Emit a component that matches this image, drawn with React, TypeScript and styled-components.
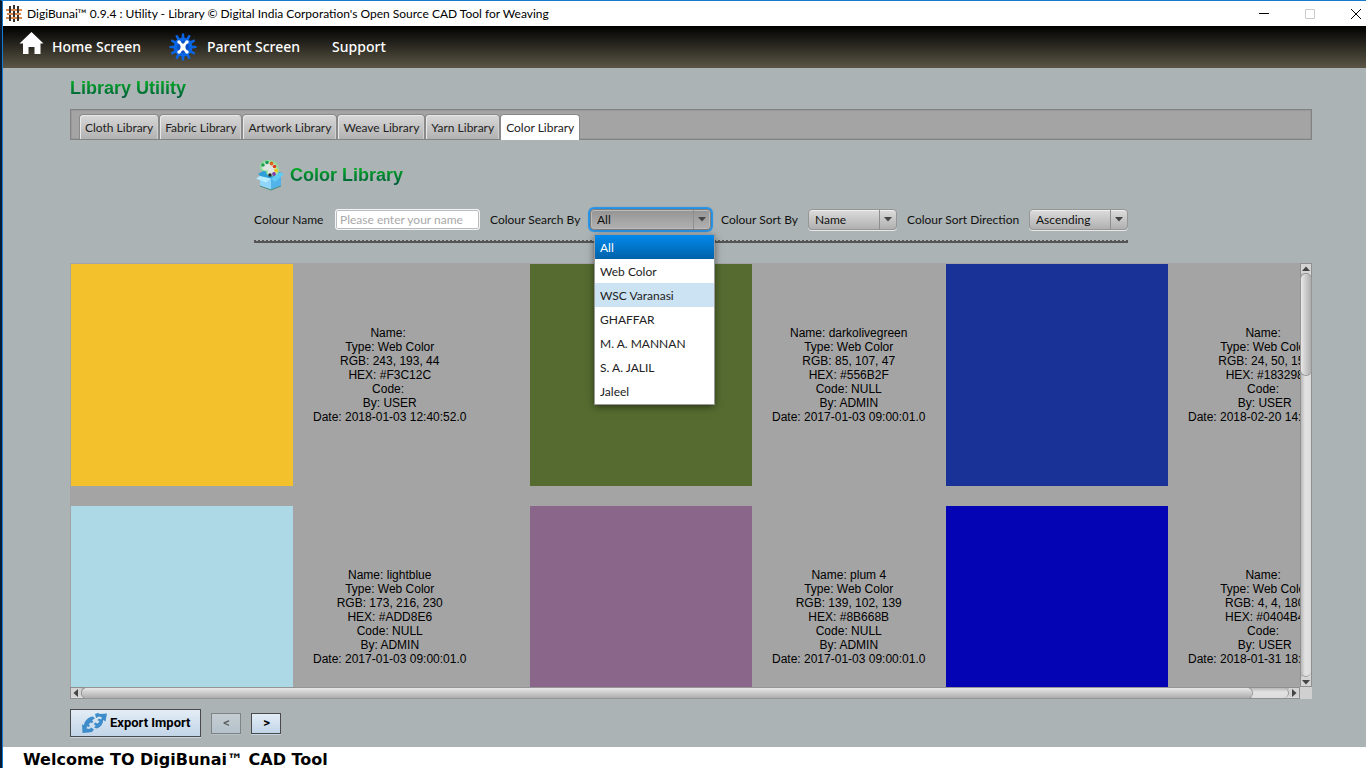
import React, { useState } from "react";
import styled, { createGlobalStyle, css } from "styled-components";

const uiFont = `Lato, "Segoe UI", sans-serif`;
const arial = `"Liberation Sans", Arial, sans-serif`;

const GlobalStyle = createGlobalStyle`
  *, *::before, *::after { box-sizing: border-box; }
  body { margin: 0; font-family: ${uiFont}; font-size: 12px; color: #111; }
  button, input, select { font: inherit; color: inherit; margin: 0; }
`;

const Window = styled.div`
  display: flex;
  flex-direction: column;
  height: 100vh;
  overflow: hidden;
  border-top: 1px solid #1979ca;
  border-left: 2px solid #061a33;
  background: #abb3b4;
`;

const Inner = styled.div`
  flex: 1;
  min-height: 0;
  display: flex;
  flex-direction: column;
  border-left: 1px solid #1979ca;
`;

const TitleBar = styled.header`
  display: flex;
  align-items: center;
  height: 25px;
  flex: none;
  padding-left: 3px;
  background: #fff;
  color: #000;
`;

const WindowTitle = styled.span`
  flex: 1;
  margin-left: 5px;
  white-space: nowrap;
`;

const WindowButton = styled.button`
  width: 46px;
  height: 25px;
  flex: none;
  display: flex;
  align-items: center;
  justify-content: center;
  padding: 0;
  border: 0;
  background: none;
  color: #000;

  &:disabled { color: #ccc; }
  &:last-child { margin-right: -13px; }
`;

const MenuBar = styled.nav`
  display: flex;
  align-items: center;
  height: 42px;
  flex: none;
  padding-left: 16px;
  background: linear-gradient(#000, #5b5646);
`;

const MenuButton = styled.button<{ $wide?: boolean }>`
  display: flex;
  align-items: center;
  gap: ${(p) => (p.$wide ? 10 : 8)}px;
  height: 42px;
  padding: 0;
  margin-right: ${(p) => (p.$wide ? 32 : 28)}px;
  border: 0;
  background: none;
  color: #fff;
  font-family: "Noto Sans", sans-serif;
  font-size: 14px;
  font-weight: 500;
  line-height: 20px;
`;

const Content = styled.main`
  flex: 1;
  min-height: 0;
  display: flex;
  flex-direction: column;
  padding: 10px 54px 10px 67px;
`;

const Heading = styled.h1`
  width: fit-content;
  margin: 0;
  font: bold 18px/21px ${arial};
  background: linear-gradient(#00b020 10%, #005c3c 90%);
  background-clip: text;
  -webkit-background-clip: text;
  color: transparent;
`;

const TabBar = styled.div`
  display: flex;
  align-items: flex-end;
  height: 31px;
  flex: none;
  margin-top: 10px;
  padding-left: 8px;
  border: 1px solid #828282;
  background: #a4a4a4;
  box-shadow: inset 0 0 0 1px #999;
`;

const Tab = styled.button<{ $active?: boolean }>`
  height: 25px;
  padding: 0 5px;
  border: 1px solid #8a8a8a;
  border-bottom-width: 0;
  border-radius: 4px 4px 0 0;
  background: linear-gradient(#d8d8d8, #b2b2b2);
  box-shadow: inset 1px 1px 0 #e8e8e8, inset -1px 0 0 #d0d0d0;
  color: #222;
  white-space: nowrap;
  ${(p) =>
    p.$active &&
    css`
      height: 26px;
      margin-bottom: -1px;
      background: #fff;
      box-shadow: none;
    `}
`;

const SearchPanel = styled.section`
  align-self: center;
  flex: none;
  margin-top: 19px;
`;

const PanelTitle = styled.div`
  display: flex;
  align-items: center;
  gap: 4px;
  height: 32px;
`;

const SearchForm = styled.form`
  display: grid;
  grid-template-columns: 71px 145px 90px 121px 77px 89px 112px 99px;
  column-gap: 10px;
  align-items: center;
  height: 22px;
  margin-top: 17px;
`;

const FieldLabel = styled.label`
  white-space: nowrap;
  color: #111;
`;

const TextInput = styled.input`
  width: 100%;
  height: 21px;
  padding: 0 4px;
  border: 1px solid #f4f4f4;
  border-radius: 3px;
  outline: 0;
  background: #fff;
  box-shadow: inset 0 0 0 1px #b9bcbd;

  &::placeholder { color: #a9a9a9; opacity: 1; }
`;

const SelectBox = styled.div<{ $open?: boolean }>`
  position: relative;
  height: 21px;
  border: 1px solid #969696;
  border-radius: 4px;
  background: linear-gradient(#dcdcdc, #b0b0b0);
  box-shadow: inset 0 1px 0 #eee, 0 1px 0 #e8e8e8;
  ${(p) =>
    p.$open &&
    css`
      border-color: #7c7c7c;
      background: linear-gradient(#949494, #b2b2b2);
      box-shadow: inset 0 0 0 1px #bcbcbc, 0 0 0 1px #2191e8, 0 0 1px 2px #2191e8;
    `}
`;

const Select = styled.select`
  appearance: none;
  width: 100%;
  height: 19px;
  padding: 1px 22px 0 6px;
  border: 0;
  outline: 0;
  background: none;
`;

const SelectArrow = styled.span`
  position: absolute;
  top: 0;
  right: 0;
  bottom: 0;
  width: 17px;
  display: flex;
  align-items: center;
  justify-content: center;
  border-left: 1px solid #8e8e8e;
  pointer-events: none;
  color: #444;
`;

const Popup = styled.ul`
  position: absolute;
  z-index: 5;
  top: 25px;
  left: 4px;
  width: 119px;
  margin: 0;
  padding: 0 0 1px;
  list-style: none;
  background: #fff;
  box-shadow: 0 0 0 1px #9a9a9a, 0 2px 8px rgba(0, 0, 0, 0.6);
`;

const Option = styled.li<{ $state?: "selected" | "hover" }>`
  height: 24px;
  padding: 1px 5px 0;
  line-height: 24px;
  color: #222;
  ${(p) =>
    p.$state === "selected" &&
    css`
      color: #fff;
      background: linear-gradient(#0389ec, #0062a8);
    `}
  ${(p) =>
    p.$state === "hover" &&
    css`
      background: #cce3f3;
    `}
`;

const Separator = styled.div`
  height: 3px;
  margin-top: 10px;
  border-bottom: 2px solid #555;
  background: repeating-linear-gradient(90deg, #555 0 2px, #abb3b4 2px 4px);
`;

const ScrollPane = styled.section`
  flex: 1;
  min-height: 0;
  display: grid;
  grid-template: minmax(0, 1fr) 12px / minmax(0, 1fr) 12px;
  margin-top: 20px;
`;

const Viewport = styled.div`
  overflow: hidden;
  padding: 1px 0 0 1px;
  background: #a4a4a4;
`;

const ColorGrid = styled.div`
  display: grid;
  grid-template-columns: 439px 396px 396px;
  gap: 20px;
`;

const ColorItem = styled.article`
  display: flex;
  align-items: center;
  gap: 20px;
  height: 222px;
`;

const Swatch = styled.div<{ $color: string }>`
  width: 222px;
  height: 222px;
  flex: none;
  background: ${(p) => p.$color};
`;

const ColorInfo = styled.p`
  margin: 0;
  font: 12px/14px ${arial};
  text-align: center;
  white-space: pre;
  color: #000;
`;

const ScrollBar = styled.div<{ $vertical?: boolean }>`
  display: flex;
  flex-direction: ${(p) => (p.$vertical ? "column" : "row")};
  border: 1px solid #8f8f8f;
  background: linear-gradient(${(p) => (p.$vertical ? "90deg" : "180deg")}, #b8b8b8, #e2e2e2 40%, #dcdcdc);
`;

const ScrollArrow = styled.button`
  flex: none;
  width: 10px;
  height: 9px;
  display: flex;
  align-items: center;
  justify-content: center;
  padding: 0;
  border: 0;
  background: #d4d4d4;
  color: #444;
`;

const ScrollTrack = styled.div<{ $vertical?: boolean }>`
  flex: 1;
  display: flex;
  flex-direction: ${(p) => (p.$vertical ? "column" : "row")};
  border: 0 solid #999;
  border-width: ${(p) => (p.$vertical ? "1px 0" : "0 1px")};
  border-radius: 5px;
`;

const ScrollThumb = styled.div<{ $vertical?: boolean; $size: number }>`
  flex: 0 0 ${(p) => p.$size}%;
  border-radius: 5px;
  background: linear-gradient(${(p) => (p.$vertical ? "90deg" : "180deg")}, #e8e8e8, #adadad);
  box-shadow: 0 0 0 1px #959595;
`;

const ScrollCorner = styled.div`
  background: #d0d0d0;
`;

const Actions = styled.div`
  display: flex;
  align-items: center;
  gap: 10px;
  flex: none;
  height: 28px;
  margin-top: 10px;
`;

const ActionButton = styled.button`
  display: flex;
  align-items: center;
  justify-content: center;
  height: 28px;
  padding: 0 10px;
  gap: 2px;
  border: 1px solid #4a4a4a;
  background: linear-gradient(#e3edf6, #c2d5e8);
  box-shadow: 0 1px 0 #c4d4e4;
  font-family: Roboto, sans-serif;
  font-size: 13px;
  font-weight: 700;
  line-height: 16px;
  color: #000;
  white-space: nowrap;
`;

const PageButton = styled(ActionButton)`
  width: 30px;
  height: 21px;
  padding: 0;

  &:disabled { opacity: 0.45; }
`;

const StatusBar = styled.footer`
  flex: none;
  height: 21px;
  padding: 3px 20px 0;
  background: #fff;
  color: #000;
  font: bold 16px/19px "DejaVu Sans", "Arial Black", sans-serif;
  white-space: nowrap;
`;

const WeaveIcon = () => (
  <svg width="16" height="17" viewBox="0 0 16 17" fill="none" strokeWidth="2" aria-hidden="true">
    <path d="M0 5h3M5 5h6M13 5h3M1 9h6M9 9h6M0 13h3M5 13h6M13 13h3" stroke="#d98a50" />
    <path d="M4 1v7M4 10v6M8 0v4M8 6v6M8 14v3M12 1v7M12 10v6" stroke="#3a302c" />
  </svg>
);

const HomeIcon = () => (
  <svg width="25" height="33" viewBox="0 0 25 33" aria-hidden="true">
    <path d="M12.500 1 24.500 12.500h-3V23H15.500v-7h-6v7H4V12.500H.5z" fill="#fff" />
  </svg>
);

const GearIcon = () => (
  <svg width="28" height="28" viewBox="-14 -14 28 28" aria-hidden="true">
    {Array.from({ length: 12 }, (_, i) => (
      <path key={i} d="M-1.500-8-1.100-13.500h2.200L1.500-8z" fill="#0a66e4" transform={`rotate(${i * 30})`} />
    ))}
    <circle r="9.500" fill="#0a66e4" />
    <circle r="6" fill="#0a4fc0" />
    <path d="M-3.500-5 3.500 5M3.500-5-3.500 5" stroke="#fff" strokeWidth="2.500" />
    <g fill="#fff">
      <ellipse rx="2.500" ry="3.500" />
      <circle cx="-4" cy="-5" r="1.700" />
      <circle cx="4" cy="-5" r="1.700" />
      <circle cx="-4" cy="5" r="1.700" />
      <circle cx="4" cy="5" r="1.700" />
    </g>
  </svg>
);

const PaletteIcon = () => (
  <svg width="32" height="32" viewBox="0 0 32 32" aria-hidden="true">
    <path d="M4 15 9 12h14l5 2-7 6H10z" fill="#2e9fd8" />
    <path d="M6 8C6 3 10 1 15 1c7 0 10 5 10 11 0 4-3 6-8 5-4 0-5-3-5-5-3 1-6 0-6-4z" fill="#8fe0a0" />
    <path d="M8 8c0-4 3-5 7-5 5 0 8 4 8 9 0 3-2 4-6 4-3 0-4-2-3-5-3 1-6 0-6-3z" fill="#dfe6e2" />
    <circle cx="9" cy="6" r="1.800" fill="#20a050" />
    <circle cx="13" cy="3.500" r="1.800" fill="#1f9a58" />
    <circle cx="17.500" cy="4.500" r="1.900" fill="#e0651c" />
    <circle cx="20.500" cy="7.500" r="1.800" fill="#d8411a" />
    <circle cx="22" cy="11.500" r="1.900" fill="#f0c818" />
    <circle cx="20" cy="15" r="1.900" fill="#7a3ca8" />
    <circle cx="16" cy="16" r="1.700" fill="#222" />
    <path d="M6 18 17 20v11L6 27z" fill="#8fd6fa" />
    <path d="M17 20 27 16v11l-10 4z" fill="#52b2ea" />
    <path d="M6 17 2 19.500l10 4 5-4z" fill="#b6ecff" />
    <path d="m17 19.500 4 3.500 9-8-4-1.500z" fill="#62cdf2" />
    <path d="M6 27l11 4 10-4" fill="none" stroke="#4f8a78" />
  </svg>
);

const TransferIcon = () => (
  <svg width="27" height="22" viewBox="0 0 27 22" aria-hidden="true">
    <g fill="#3f8ccb">
      <path d="M14 2 17 1l2 1 7-.5-1.500 8L22 8c0 4-2 7-6 8.500l-3-1 2-2-2.500-1.500 2-1.500 2.500 1.500 2-2-2.500-2 1.500-1.500 2 1 1-2-3-1-3 1.500z" />
      <path d="M1 12.500 3 13c.5-4 4-8 9-8.500l2 2-3 1.500 1.500 2-2 1-2-1-1.500 2 2 1.500-1 1.500L6 14l-.5 2.500 3 .5 1.500-1.500 3 2-2 2.500-4 .5L1.500 21z" />
      <path d="M3.500 12 10 5.500 12 7 6 15zM14 14l7-7 1 3-5 6z" />
    </g>
  </svg>
);

const Triangle = ({ turn = 0 }: { turn?: number }) => (
  <svg width="8" height="8" viewBox="0 0 8 8" aria-hidden="true">
    <path d="M0 2h8L4 6.500z" fill="currentColor" transform={`rotate(${turn} 4 4)`} />
  </svg>
);

const tabs = ["Cloth Library", "Fabric Library", "Artwork Library", "Weave Library", "Yarn Library", "Color Library"];
const sources = ["All", "Web Color", "WSC Varanasi", "GHAFFAR", "M. A. MANNAN", "S. A. JALIL", "Jaleel"];

const colors = [
  { name: "", rgb: "243, 193, 44", hex: "#F3C12C", code: "", by: "USER", date: "2018-01-03 12:40:52.0" },
  { name: "darkolivegreen", rgb: "85, 107, 47", hex: "#556B2F", code: "NULL", by: "ADMIN", date: "2017-01-03 09:00:01.0" },
  { name: "", rgb: "24, 50, 152", hex: "#183298", code: "", by: "USER", date: "2018-02-20 14:21:36.0" },
  { name: "lightblue", rgb: "173, 216, 230", hex: "#ADD8E6", code: "NULL", by: "ADMIN", date: "2017-01-03 09:00:01.0" },
  { name: "plum 4", rgb: "139, 102, 139", hex: "#8B668B", code: "NULL", by: "ADMIN", date: "2017-01-03 09:00:01.0" },
  { name: "", rgb: "4, 4, 180", hex: "#0404B4", code: "", by: "USER", date: "2018-01-31 18:02:14.0" },
];

const describe = (c: (typeof colors)[number]) =>
  [
    `Name: ${c.name}`,
    "Type: Web Color",
    `RGB: ${c.rgb}`,
    `HEX: ${c.hex}`,
    `Code: ${c.code}`,
    `By: ${c.by}`,
    `Date: ${c.date}`,
  ].join("\n");

export default function App() {
  const [source, setSource] = useState("All");
  const [hovered, setHovered] = useState("WSC Varanasi");

  return (
    <Window>
      <GlobalStyle />
      <Inner>
        <TitleBar>
          <WeaveIcon />
          <WindowTitle>
            DigiBunai™ 0.9.4 : Utility - Library © Digital India Corporation's Open Source CAD Tool for Weaving
          </WindowTitle>
          <WindowButton aria-label="Minimize">
            <svg width="10" height="10">
              <path d="M0 4.500h10" stroke="currentColor" />
            </svg>
          </WindowButton>
          <WindowButton aria-label="Maximize" disabled>
            <svg width="10" height="10">
              <path d="M.5.5h9v9h-9z" stroke="currentColor" fill="none" />
            </svg>
          </WindowButton>
          <WindowButton aria-label="Close">
            <svg width="10" height="10">
              <path d="m0 0 10 10M10 0 0 10" stroke="currentColor" />
            </svg>
          </WindowButton>
        </TitleBar>

        <MenuBar>
          <MenuButton>
            <HomeIcon />
            Home Screen
          </MenuButton>
          <MenuButton $wide>
            <GearIcon />
            Parent Screen
          </MenuButton>
          <MenuButton>Support</MenuButton>
        </MenuBar>

        <Content>
          <Heading>Library Utility</Heading>
          <TabBar role="tablist">
            {tabs.map((tab) => (
              <Tab key={tab} role="tab" aria-selected={tab === "Color Library"} $active={tab === "Color Library"}>
                {tab}
              </Tab>
            ))}
          </TabBar>

          <SearchPanel>
            <PanelTitle>
              <PaletteIcon />
              <Heading as="h2">Color Library</Heading>
            </PanelTitle>
            <SearchForm>
              <FieldLabel htmlFor="name">Colour Name</FieldLabel>
              <TextInput id="name" placeholder="Please enter your name" />
              <FieldLabel htmlFor="source">Colour Search By</FieldLabel>
              <SelectBox $open>
                <Select id="source" value={source} onChange={(e) => setSource(e.target.value)}>
                  {sources.map((s) => (
                    <option key={s}>{s}</option>
                  ))}
                </Select>
                <SelectArrow>
                  <Triangle />
                </SelectArrow>
                <Popup role="listbox" aria-label="Colour Search By">
                  {sources.map((s) => (
                    <Option
                      key={s}
                      role="option"
                      aria-selected={s === source}
                      $state={s === source ? "selected" : s === hovered ? "hover" : undefined}
                      onMouseEnter={() => setHovered(s)}
                      onClick={() => setSource(s)}
                    >
                      {s}
                    </Option>
                  ))}
                </Popup>
              </SelectBox>
              <FieldLabel htmlFor="sort">Colour Sort By</FieldLabel>
              <SelectBox>
                <Select id="sort">
                  <option>Name</option>
                  <option>Date</option>
                </Select>
                <SelectArrow>
                  <Triangle />
                </SelectArrow>
              </SelectBox>
              <FieldLabel htmlFor="direction">Colour Sort Direction</FieldLabel>
              <SelectBox>
                <Select id="direction">
                  <option>Ascending</option>
                  <option>Descending</option>
                </Select>
                <SelectArrow>
                  <Triangle />
                </SelectArrow>
              </SelectBox>
            </SearchForm>
            <Separator />
          </SearchPanel>

          <ScrollPane>
            <Viewport>
              <ColorGrid>
                {colors.map((c) => (
                  <ColorItem key={c.hex}>
                    <Swatch $color={c.hex} />
                    <ColorInfo>{describe(c)}</ColorInfo>
                  </ColorItem>
                ))}
              </ColorGrid>
            </Viewport>
            <ScrollBar $vertical>
              <ScrollArrow aria-label="Scroll up">
                <Triangle turn={180} />
              </ScrollArrow>
              <ScrollTrack $vertical>
                <ScrollThumb $vertical $size={25} />
              </ScrollTrack>
              <ScrollArrow aria-label="Scroll down">
                <Triangle />
              </ScrollArrow>
            </ScrollBar>
            <ScrollBar>
              <ScrollArrow aria-label="Scroll left">
                <Triangle turn={90} />
              </ScrollArrow>
              <ScrollTrack>
                <ScrollThumb $size={97} />
              </ScrollTrack>
              <ScrollArrow aria-label="Scroll right">
                <Triangle turn={270} />
              </ScrollArrow>
            </ScrollBar>
            <ScrollCorner />
          </ScrollPane>

          <Actions>
            <ActionButton>
              <TransferIcon />
              Export Import
            </ActionButton>
            <PageButton aria-label="Previous page" disabled>
              &lt;
            </PageButton>
            <PageButton aria-label="Next page">&gt;</PageButton>
          </Actions>
        </Content>

        <StatusBar>Welcome TO DigiBunai™ CAD Tool</StatusBar>
      </Inner>
    </Window>
  );
}
